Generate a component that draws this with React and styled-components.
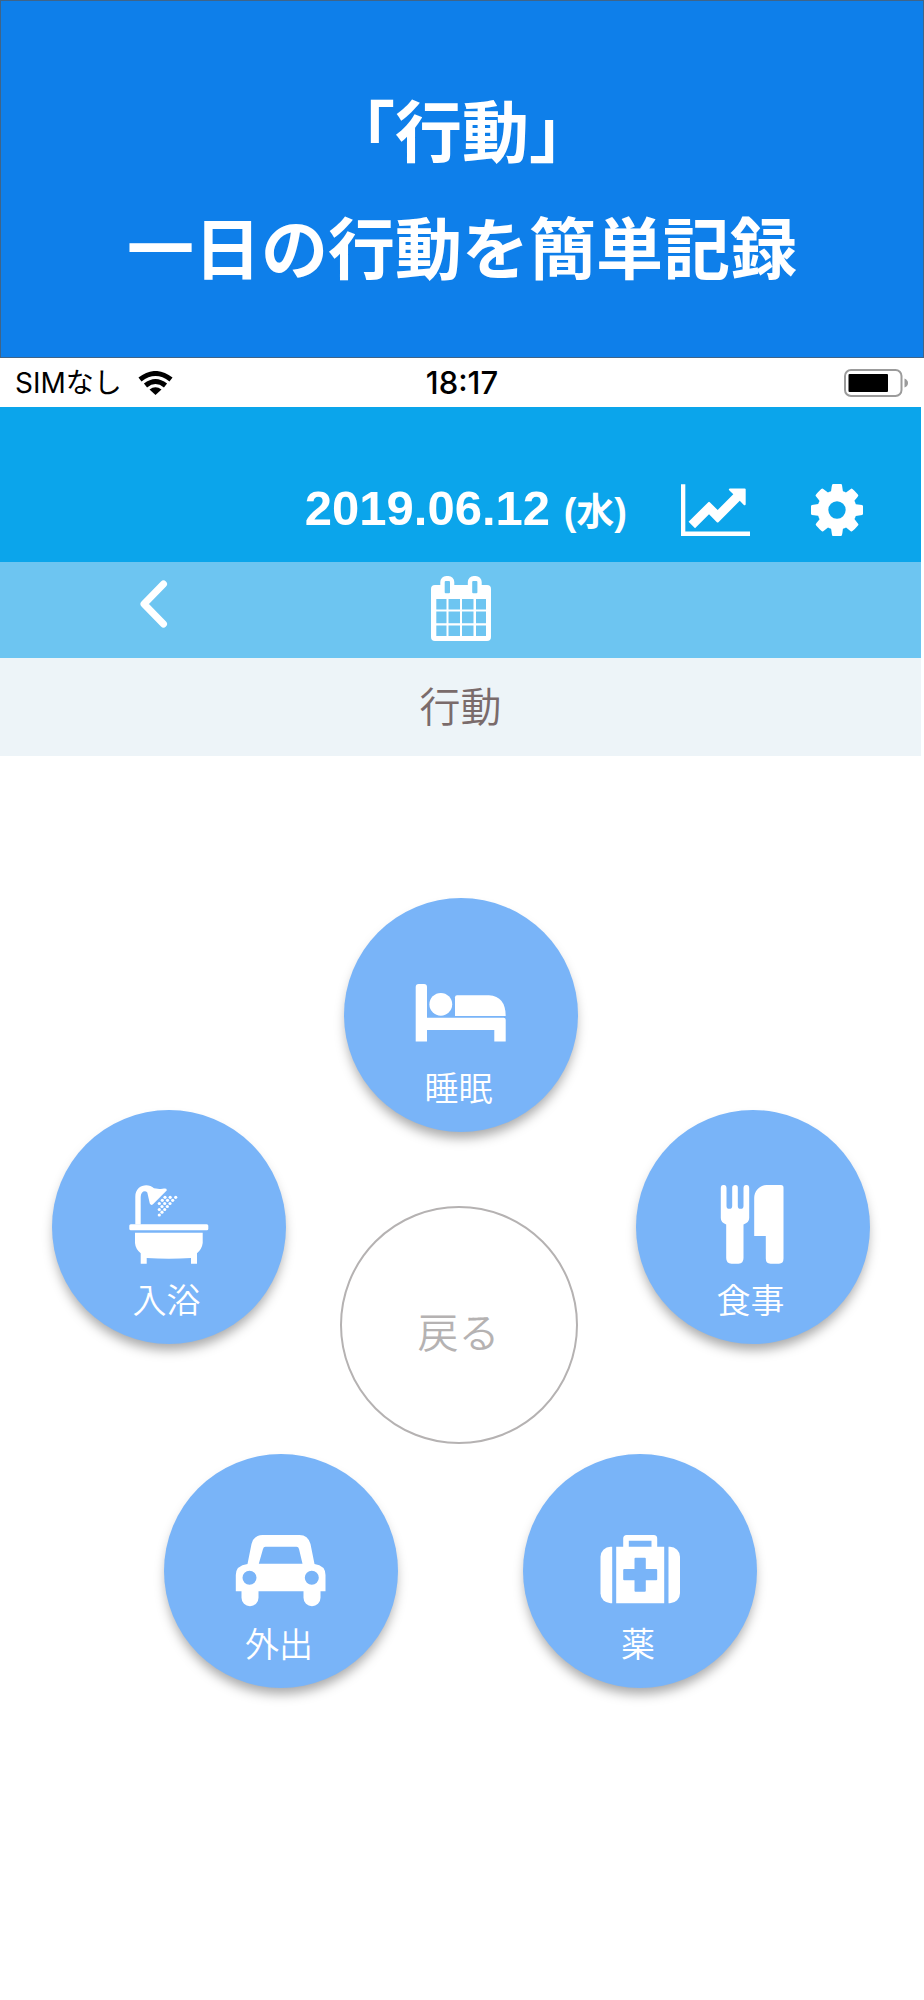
import React from "react";
import styled, { createGlobalStyle } from "styled-components";

const GlobalStyle = createGlobalStyle`
  * {
    box-sizing: border-box;
  }

  body {
    margin: 0;
    background: #ffffff;
    font-family: "Noto Sans CJK JP", sans-serif;
  }

  button {
    border: none;
    padding: 0;
    background: none;
    font-family: inherit;
    color: inherit;
    cursor: pointer;
  }

  svg {
    display: block;
  }
`;

const Page = styled.div`
  width: 100%;
  min-height: 100vh;
  background: #ffffff;
`;

const Banner = styled.header`
  padding: 68px 20px 54px;
  border: 1px solid #3f6488;
  background: #0e7fea;
  text-align: center;
`;

const BannerTitle = styled.h1`
  margin: 0;
  color: #ffffff;
  font-size: 67px;
  font-weight: 700;
  line-height: 117px;
`;

const Screen = styled.main`
  padding-right: 3px;
`;

const StatusBar = styled.div`
  height: 49px;
  padding: 0 12px 0 15px;
  display: grid;
  grid-template-columns: 1fr auto 1fr;
  align-items: center;
  color: #000000;
`;

const Carrier = styled.div`
  display: flex;
  align-items: center;
  gap: 16px;
  font-family: Inter, "Noto Sans CJK JP", sans-serif;
  font-size: 28px;
  font-weight: 400;
  line-height: 32px;
`;

const Clock = styled.time`
  font-family: Inter, sans-serif;
  font-size: 31px;
  font-weight: 500;
  line-height: 32px;
`;

const BatteryIcon = styled.svg`
  justify-self: end;
`;

const AppHeader = styled.div`
  height: 155px;
  padding: 50px 58px 0 20px;
  display: flex;
  justify-content: flex-end;
  align-items: center;
  gap: 54px;
  background: #0ba5eb;
  color: #ffffff;
`;

const DateText = styled.div`
  font-family: "Liberation Sans", "Noto Sans CJK JP", sans-serif;
  font-size: 49px;
  font-weight: 700;
  line-height: 60px;
  white-space: nowrap;
`;

const Weekday = styled.span`
  font-size: 38px;
`;

const HeaderButtons = styled.div`
  display: flex;
  gap: 61px;
`;

const DateNav = styled.nav`
  height: 96px;
  padding: 14px 140px 0;
  display: grid;
  grid-template-columns: 1fr auto 1fr;
  align-items: start;
  background: #6dc5f1;
  color: #ffffff;
`;

const PrevButton = styled.button`
  justify-self: start;
`;

const SectionTitle = styled.h2`
  margin: 0;
  padding-bottom: 5px;
  background: #edf4f8;
  color: #7a6b6b;
  font-size: 41px;
  font-weight: 350;
  line-height: 93px;
  text-align: center;
`;

const Menu = styled.section`
  max-width: 818px;
  margin: 0 auto;
  padding: 142px 0 60px;
`;

const MenuRow = styled.div`
  display: flex;
  justify-content: ${(props) => props.$justify || "center"};
  align-items: flex-start;
  gap: ${(props) => props.$gap || "0"};
  margin-top: ${(props) => props.$top || "0"};
`;

const ActionButton = styled.button`
  width: 234px;
  height: 234px;
  padding-top: 75px;
  display: flex;
  flex-direction: column;
  align-items: center;
  gap: 14px;
  flex-shrink: 0;
  border-radius: 50%;
  background: #79b4f8;
  box-shadow: 0 8px 12px -2px rgba(0, 0, 0, 0.34);
  color: #ffffff;
`;

const ActionLabel = styled.span`
  padding-right: 4px;
  font-size: 34px;
  font-weight: 350;
  line-height: 40px;
`;

const BackButton = styled.button`
  width: 238px;
  height: 238px;
  margin: 96px 4px 0 0;
  padding-top: 10px;
  flex-shrink: 0;
  border: 2px solid #b5b2b2;
  border-radius: 50%;
  color: #b5b2b2;
  font-size: 41px;
  font-weight: 350;
`;

const WifiIcon = () => (
  <svg width="35" height="24" viewBox="0 0 35 24" fill="none" stroke="currentColor" strokeWidth="5" aria-hidden="true">
    <path d="M2 8.500Q17.500 -3.500 33 8.500" />
    <path d="M7.500 14.500Q17.500 6.500 27.500 14.500" />
    <path d="M11.500 18.500Q17.500 14 23.500 18.500L17.500 24Z" fill="currentColor" stroke="none" />
  </svg>
);

const Battery = () => (
  <BatteryIcon width="65" height="28" viewBox="0 0 65 28" aria-label="バッテリー">
    <rect x="1" y="1" width="56.500" height="26" rx="6" fill="none" stroke="#9b9b9b" strokeWidth="2" />
    <rect x="4.500" y="5" width="39.500" height="18" rx="1" fill="#000000" />
    <path d="M60.500 9.500Q64 11 64 14T60.500 18.500Z" fill="#9b9b9b" />
  </BatteryIcon>
);

const ChartIcon = () => (
  <svg width="69" height="52" viewBox="0 128 2048 1536" fill="currentColor" aria-hidden="true">
    <path d="M2048 1536v128h-2048v-1536h128v1408h1920zm-128-1248v435q0 21-19.500 29.500t-35.500-7.500l-121-121-633 633q-10 10-23 10t-23-10l-233-233-416 416-192-192 585-585q10-10 23-10t23 10l233 233 464-464-121-121q-16-16-7.500-35.500t29.500-19.500h435q14 0 23 9t9 23z" />
  </svg>
);

const GearIcon = () => (
  <svg width="52" height="52" viewBox="0 128 1536 1536" fill="currentColor" fillRule="evenodd" aria-hidden="true">
    <path d="M1024 896q0-106-75-181t-181-75-181 75-75 181 75 181 181 75 181-75 75-181zm512-109v222q0 12-8 23t-20 13l-185 28q-19 54-39 91 35 50 107 138 10 12 10 25t-9 23q-27 37-99 108t-94 71q-12 0-26-9l-138-108q-44 23-91 38-16 136-29 186-7 28-36 28h-222q-14 0-24.500-8.500t-11.500-21.500l-28-184q-49-16-90-37l-141 107q-10 9-25 9-14 0-25-11-126-114-165-168-7-10-7-23 0-12 8-23 15-21 51-66.500t54-70.500q-27-50-41-99l-183-27q-13-2-21-12.500t-8-23.500v-222q0-12 8-23t19-13l186-28q14-46 39-92-40-57-107-138-10-12-10-24 0-10 9-23 26-36 98.500-107.500t94.500-71.500q13 0 26 10l138 107q44-23 91-38 16-136 29-186 7-28 36-28h222q14 0 24.500 8.500t11.500 21.500l28 184q49 16 90 37l142-107q9-9 24-9 13 0 25 10 129 119 165 170 7 8 7 22 0 12-8 23-15 21-51 66.500t-54 70.500q26 50 41 98l183 28q13 2 21 12.500t8 23.500z" />
  </svg>
);

const ChevronIcon = () => (
  <svg width="28" height="56" viewBox="0 0 28 56" fill="none" stroke="currentColor" strokeWidth="7" strokeLinecap="round" strokeLinejoin="round" aria-hidden="true">
    <path d="M23.500 8L4 28L23.500 48" />
  </svg>
);

const CalendarIcon = () => (
  <svg width="60" height="65" viewBox="0 0 60 65" fill="currentColor" fillRule="evenodd" aria-hidden="true">
    <path d="M4 9H9.300V6A6 6 0 0 1 15.300 0H17.300A6 6 0 0 1 23.300 6V9H36.800V6A6 6 0 0 1 42.800 0H44.700A6 6 0 0 1 50.700 6V9H56A4 4 0 0 1 60 13V61A4 4 0 0 1 56 65H4A4 4 0 0 1 0 61V13A4 4 0 0 1 4 9Z
      M13.700 6V16.300Q13.700 17.300 14.700 17.300H18Q19 17.300 19 16.300V6Q19 5 18 5H14.700Q13.700 5 13.700 6Z
      M41.200 6V16.300Q41.200 17.300 42.200 17.300H45.400Q46.400 17.300 46.400 16.300V6Q46.400 5 45.400 5H42.200Q41.200 5 41.200 6Z
      M5.300 23H15.500V33.500H5.300Z M17.500 23H29V33.500H17.500Z M31 23H42.500V33.500H31Z M45 23H55V33.500H45Z
      M5.300 35.500H15.500V47.300H5.300Z M17.500 35.500H29V47.300H17.500Z M31 35.500H42.500V47.300H31Z M45 35.500H55V47.300H45Z
      M5.300 49.600H15.500V60H5.300Z M17.500 49.600H29V60H17.500Z M31 49.600H42.500V60H31Z M45 49.600H55V60H45Z" />
  </svg>
);

// 丸ボタンのアイコンは全部同じサイズの枠に描く
const ActionIcon = ({ children }) => (
  <svg width="92" height="80" viewBox="0 0 92 80" fill="currentColor" fillRule="evenodd" aria-hidden="true">
    {children}
  </svg>
);

const BedIcon = () => (
  <ActionIcon>
    <path d="M3.700 11H9A3 3 0 0 1 12 14V44.700H88.700A2 2 0 0 1 90.700 46.700V68.500H79.300V57H12V68.500H0.700V14A3 3 0 0 1 3.700 11Z" />
    <circle cx="25.800" cy="31.300" r="11.400" />
    <path d="M42 22.300H74Q90.700 23.500 90.700 43H40V24.300A2 2 0 0 1 42 22.300Z" />
  </ActionIcon>
);

const waterDrops = [
  [42, 12.300], [47.200, 12.300], [52.700, 12.300],
  [39.300, 15.300], [44.500, 15.300], [49.700, 15.300],
  [36.300, 18.500], [41.700, 18.500], [47, 18.500],
  [39, 21.500], [44.300, 21.500],
  [36.300, 24.500], [41.700, 24.500],
  [39, 27.200],
  [36.300, 30],
];

const BathIcon = () => (
  <ActionIcon>
    <path d="M12.300 39.500V11.700C12.300 0 25 -2.500 31 3.300C36 4.200 39 4.300 41 3.600Q44.300 3.300 43.700 5.500L30 19.300Q28 21 26.800 18.500L24.300 7.500C22 5 17.700 6.500 17.700 12V39.500Z" />
    {waterDrops.map(([x, y], i) => (
      <circle key={i} cx={x} cy={y} r="1.600" />
    ))}
    <rect x="6.300" y="39.300" width="79" height="6" rx="1.500" />
    <path d="M12 47.700H79.700V58Q79 64 74 68.300V78.700H68V73Q46 74.500 23.700 73V78.700H17.700V68.300Q12.500 64 12 58Z" />
  </ActionIcon>
);

const MealIcon = () => (
  <ActionIcon>
    <path d="M13.800 2.800A2.800 2.800 0 0 1 19.500 2.800V21A2.800 2.800 0 0 0 25.200 21V2.800A2.800 2.800 0 0 1 30.800 2.800V21A2.800 2.800 0 0 0 36.500 21V2.800A2.800 2.800 0 0 1 42.200 2.800V33Q42.200 37.500 36.500 39.500V73Q36.500 78.700 31.500 78.700H24.500Q19.200 78.700 19.200 73V39.500Q13.800 37.500 13.800 33Z" />
    <path d="M59.500 0H74Q76.500 0 76.500 2.500V73.500Q76.500 78.700 72 78.700H63.500Q58.800 78.700 58.800 73.500V51H47.200V13C47.200 6 53 0 59.500 0Z" />
  </ActionIcon>
);

const CarIcon = () => (
  <ActionIcon>
    <path d="M27.500 6H64.500Q73 6 75.500 15L79.500 35Q90.500 36.500 90.500 46V62.300H85.500V68.700A8.500 8.500 0 0 1 68.500 68.700V62.300H23.500V68.700A8.500 8.500 0 0 1 6.500 68.700V62.300H0.800V46Q0.800 36.500 12.500 35L16.500 15Q19 6 27.500 6Z
      M30.500 17.700Q28.500 17.700 28 20L23.800 34.700H67.500L64 20Q63.500 17.700 61.500 17.700Z
      M21.500 48.700A7 7 0 1 0 7.500 48.700A7 7 0 1 0 21.500 48.700Z
      M83.800 48.700A7 7 0 1 0 69.800 48.700A7 7 0 1 0 83.800 48.700Z" />
  </ActionIcon>
);

const MedicineIcon = () => (
  <ActionIcon>
    <path d="M22.200 17.700H29.200V9.500Q29.200 6 32.700 6H59.700Q63.200 6 63.200 9.500V17.700H70.200V74.300H22.200Z
      M34.800 11.700V17.700H57.500V11.700Z
      M41.500 28.700Q40.500 28.700 40.500 29.700V40H30.200Q29.200 40 29.200 41V50.300Q29.200 51.300 30.200 51.300H40.500V61.700Q40.500 62.700 41.500 62.700H50.800Q51.800 62.700 51.800 61.700V51.300H62.200Q63.200 51.300 63.200 50.300V41Q63.200 40 62.200 40H51.800V29.700Q51.800 28.700 50.800 28.700Z" />
    <path d="M18.200 17.700V74.300H16.500A10 10 0 0 1 6.500 64.300V27.700A10 10 0 0 1 16.500 17.700Z" />
    <path d="M74.500 17.700V74.300H76A10 10 0 0 0 86 64.300V27.700A10 10 0 0 0 76 17.700Z" />
  </ActionIcon>
);

const Action = ({ icon: Icon, label }) => (
  <ActionButton type="button">
    <Icon />
    <ActionLabel>{label}</ActionLabel>
  </ActionButton>
);

const App = () => {
  return (
    <Page>
      <GlobalStyle />
      <Banner>
        <BannerTitle>
          「行動」
          <br />
          一日の行動を簡単記録
        </BannerTitle>
      </Banner>
      <Screen>
        <StatusBar>
          <Carrier>
            SIMなし
            <WifiIcon />
          </Carrier>
          <Clock>18:17</Clock>
          <Battery />
        </StatusBar>
        <AppHeader>
          <DateText>
            2019.06.12 <Weekday>(水)</Weekday>
          </DateText>
          <HeaderButtons>
            <button type="button" aria-label="グラフ">
              <ChartIcon />
            </button>
            <button type="button" aria-label="設定">
              <GearIcon />
            </button>
          </HeaderButtons>
        </AppHeader>
        <DateNav>
          <PrevButton type="button" aria-label="前の日">
            <ChevronIcon />
          </PrevButton>
          <button type="button" aria-label="カレンダー">
            <CalendarIcon />
          </button>
        </DateNav>
        <SectionTitle>行動</SectionTitle>
        <Menu>
          <MenuRow>
            <Action icon={BedIcon} label="睡眠" />
          </MenuRow>
          <MenuRow $justify="space-between" $top="-22px">
            <Action icon={BathIcon} label="入浴" />
            <BackButton type="button">戻る</BackButton>
            <Action icon={MealIcon} label="食事" />
          </MenuRow>
          <MenuRow $gap="125px" $top="10px">
            <Action icon={CarIcon} label="外出" />
            <Action icon={MedicineIcon} label="薬" />
          </MenuRow>
        </Menu>
      </Screen>
    </Page>
  );
};

export default App;
